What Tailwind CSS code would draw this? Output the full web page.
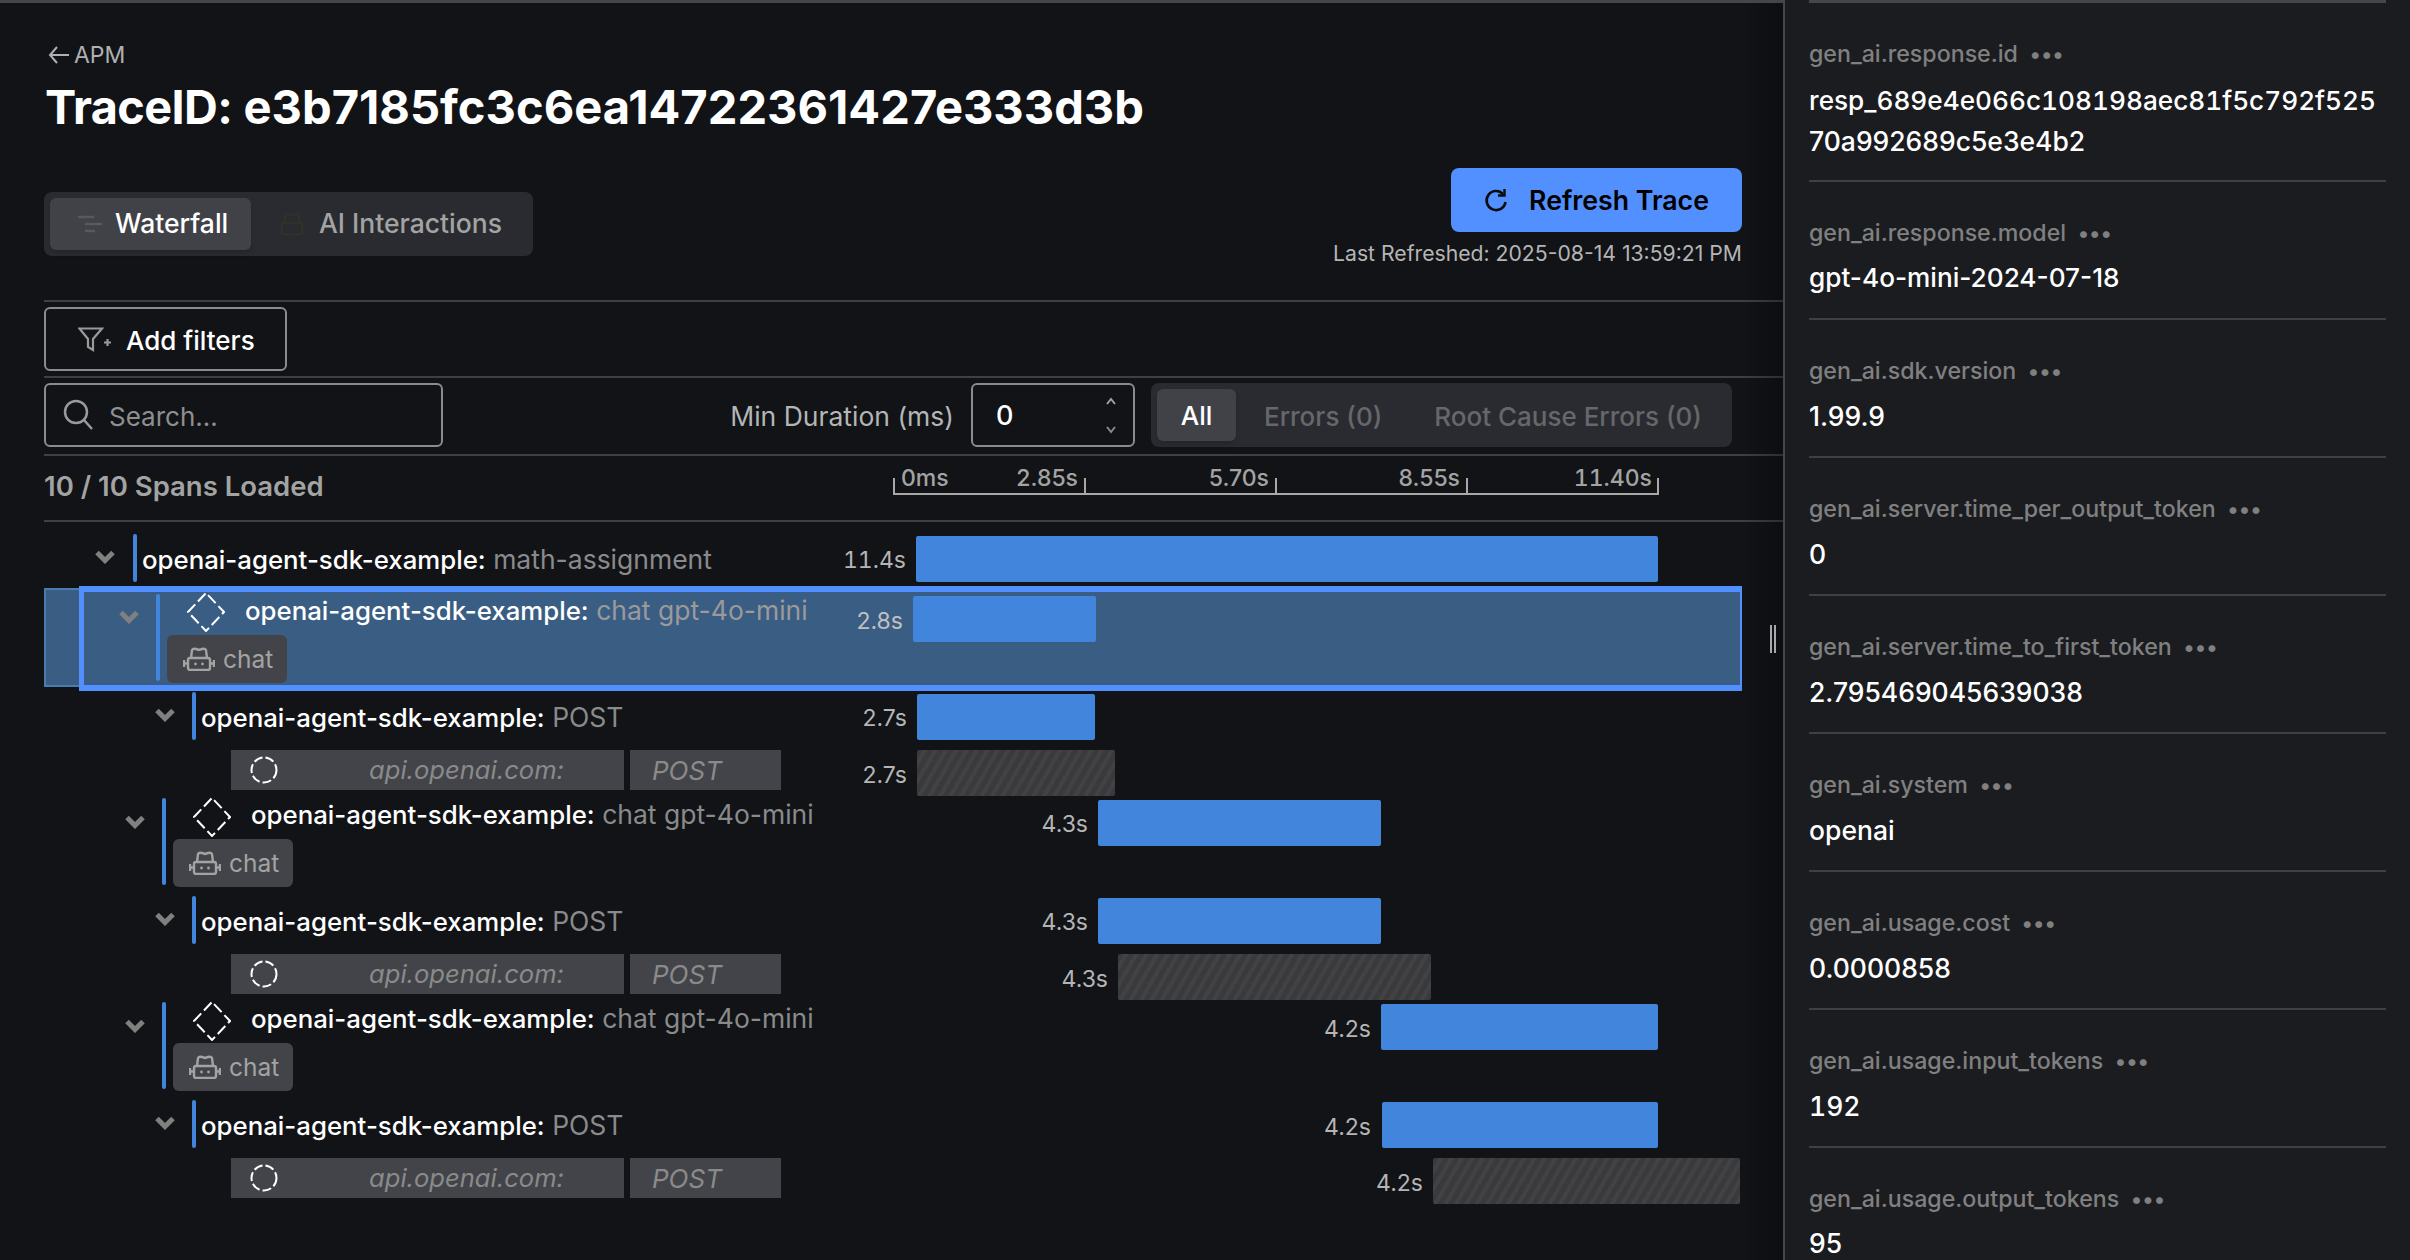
<!DOCTYPE html>
<html>
<head>
<meta charset="utf-8">
<script src="https://cdn.jsdelivr.net/npm/@tailwindcss/browser@4"></script>
<title>Trace</title>
</head>
<body class="bg-[#111317]">
<svg class="hidden">
  <defs>
    <symbol id="chev" viewBox="0 0 20 14"><path d="M2 2.500 L10 10.500 L18 2.500" fill="none" stroke="#808080" stroke-width="5"/></symbol>
    <symbol id="diamond" viewBox="0 0 38 40"><path d="M19 1 L37 20 L19 39 L1 20 Z" fill="none" stroke="#fff" stroke-width="2" stroke-dasharray="11 4" stroke-dashoffset="-3"/></symbol>
    <symbol id="circle" viewBox="0 0 28 28"><circle cx="14" cy="14" r="12.500" fill="none" stroke="#fff" stroke-width="2" stroke-dasharray="9 3"/></symbol>
    <symbol id="robot" viewBox="0 0 32 24"><g fill="none" stroke="#a3a3a3" stroke-width="2.400"><path d="M8 11 L9 3 Q10 1 13 2 L16 3 L19 2 Q22 1 23 3 L24 11"/><rect x="5" y="11" width="22" height="12" rx="2"/><path d="M1 13 V20 M31 13 V20 M0 16.500 H5 M27 16.500 H32"/></g><circle cx="12.500" cy="17" r="1.400" fill="#a3a3a3"/><circle cx="19.500" cy="17" r="1.400" fill="#a3a3a3"/></symbol>
  </defs>
</svg>
<div class="w-[2410px] h-[1260px] overflow-hidden flex font-['Inter',sans-serif]">
  <main class="relative w-[1783px] shrink-0 pl-[44px] border-t-[3px] border-[#45464b]">
    <div class="absolute right-0 top-0 bottom-0 w-[40px] bg-linear-to-r from-transparent to-black/30"></div>
    <div class="absolute left-[1770px] top-[622px] w-[6px] h-[28px] border-x-2 border-[#a8a8a8]"></div>
    <div class="h-[297px] flex justify-between">
      <div>
        <div class="flex items-center gap-[3px] mt-[40px] h-[24px] text-[23px] text-[#b0b0b0]">
          <svg class="ml-[3px] shrink-0" width="24" height="20" viewBox="0 0 24 20" fill="none" stroke="#b0b0b0" stroke-width="2"><path d="M22 10 H3 M10 2 L3 10 L10 18"/></svg><span>APM</span>
        </div>
        <h1 class="mt-[11px] ml-[1px] h-[58px] leading-[58px] text-[47.100px] font-bold text-white whitespace-nowrap"><span class="text-[46.800px] tracking-[-0.6px]">TraceID:</span> e3b7185fc3c6ea14722361427e333d3b</h1>
        <div class="mt-[56px] w-[489px] h-[64px] bg-[#2a2b30] rounded-[8px] p-[6px] flex items-center text-[26.500px] font-medium">
          <div class="w-[201px] h-[52px] bg-[#414247] rounded-[6px] flex items-center text-white pl-[27px] shadow-md">
            <svg class="shrink-0" width="26" height="20" viewBox="0 0 26 20" fill="none" stroke="#58595d" stroke-width="2.500"><path d="M1 3 H17 M8 10 H25 M8 17 H18"/></svg>
            <span class="ml-[12px]">Waterfall</span>
          </div>
          <div class="flex items-center text-[#a3a3a3] pl-[26px]">
            <svg class="shrink-0" width="30" height="24" viewBox="0 0 32 24" fill="none" stroke="#303129" stroke-width="2.400"><path d="M8 11 L9 3 Q10 1 13 2 L16 3 L19 2 Q22 1 23 3 L24 11"/><rect x="5" y="11" width="22" height="12" rx="2"/></svg>
            <span class="ml-[12px]">AI Interactions</span>
          </div>
        </div>
      </div>
      <div class="flex flex-col items-end mr-[41px]">
        <button class="mt-[165px] w-[291px] h-[64px] rounded-[8px] bg-[#528fff] flex items-center justify-center gap-[21px] text-black text-[26.700px] font-semibold">
          <svg class="shrink-0" width="24" height="26" viewBox="0 0 24 26" fill="none" stroke="#0b0b0b" stroke-width="2.600"><path d="M19 7 A9.500 9.500 0 1 0 21.500 15"/><path d="M20.500 2 V8.500 H14" stroke-width="2.400"/></svg>
          <span>Refresh Trace</span>
        </button>
        <div class="mt-[10px] text-[21.200px] leading-[22px] text-[#b5b5b5] whitespace-nowrap">Last Refreshed: 2025-08-14 13:59:21 PM</div>
      </div>
    </div>
    <div class="h-[76px] border-t-2 border-[#3f4044] pt-[5px]">
      <button class="w-[243px] h-[64px] border-2 border-[#8b8b8b] rounded-[6px] flex items-center pl-[32px] pt-[2px] text-[26px] font-medium text-white">
        <svg class="shrink-0" width="34" height="26" viewBox="0 0 34 26" fill="none" stroke="#9a9a9a" stroke-width="2.200"><path d="M1.500 1.500 H24 L15 12 V23 L10 20 V12 Z"/><path d="M26 15.500 H33 M29.500 12 V19"/></svg>
        <span class="ml-[14px]">Add filters</span>
      </button>
    </div>
    <div class="h-[78px] border-t-2 border-[#3f4044] pt-[5px] flex items-start">
      <div class="w-[399px] h-[64px] border-2 border-[#8b8b8b] rounded-[6px] flex items-center pl-[16px] text-[26px] text-[#8f8f8f]">
        <svg class="shrink-0" width="32" height="32" viewBox="0 0 32 32" fill="none" stroke="#9a9a9a" stroke-width="2.500"><circle cx="14" cy="13" r="11"/><path d="M22 21 L30 30"/></svg>
        <span class="ml-[15px] pt-[3px]">Search…</span>
      </div>
      <div class="w-[528px] h-[64px] flex items-center justify-end pr-[17px] pt-[3px] text-[26.500px] text-[#b5b5b5] whitespace-nowrap">Min Duration (ms)</div>
      <div class="w-[164px] h-[64px] border-2 border-[#8b8b8b] rounded-[6px] flex items-center justify-between pl-[23px] pr-[17px] text-[27px] text-white font-medium">
        <span class="pt-[2px]">0</span>
        <div class="flex flex-col gap-[19px]">
          <svg class="shrink-0" width="10" height="9" viewBox="0 0 10 9" fill="none" stroke="#a3a3a3" stroke-width="2"><path d="M1 7 L5 2 L9 7"/></svg>
          <svg class="shrink-0" width="10" height="9" viewBox="0 0 10 9" fill="none" stroke="#8a8a8a" stroke-width="2"><path d="M1 2 L5 7 L9 2"/></svg>
        </div>
      </div>
      <div class="ml-[16px] w-[581px] h-[64px] bg-[#2a2b30] rounded-[8px] p-[6px] flex items-center text-[26px] font-medium text-[#66676a]">
        <div class="w-[79px] h-[52px] bg-[#414247] rounded-[6px] flex items-center justify-center text-white shadow-md">All</div>
        <span class="ml-[28px] pt-[2px]">Errors (0)</span>
        <span class="ml-[52px] pt-[2px]">Root Cause Errors (0)</span>
      </div>
    </div>
    <div class="h-[66px] border-t-2 border-[#3f4044] flex">
      <div class="w-[849px] pt-[14px] text-[27.500px] leading-[33px] font-semibold text-[#a3a3a3]">10 / 10 Spans Loaded</div>
      <div class="mt-[22px] w-[766px] h-[17px] flex border-l-2 border-b-2 border-[#a8a8a8] text-[23px] leading-[18px] font-medium text-[#a3a3a3]">
        <div class="w-[191px] border-r-2 border-[#a8a8a8] flex justify-between pl-[6px] pr-[6px]"><span class="-mt-[9px]">0ms</span><span class="-mt-[9px]">2.85s</span></div>
        <div class="w-[191px] border-r-2 border-[#a8a8a8] flex justify-end pr-[6px]"><span class="-mt-[9px]">5.70s</span></div>
        <div class="w-[191px] border-r-2 border-[#a8a8a8] flex justify-end pr-[6px]"><span class="-mt-[9px]">8.55s</span></div>
        <div class="w-[191px] border-r-2 border-[#a8a8a8] flex justify-end pr-[5px]"><span class="-mt-[9px] tabular-nums">11.40s</span></div>
      </div>
    </div>
    <div class="border-t-2 border-[#3f4044] pt-[12px] text-[26.500px] text-white">
      <!-- row 1 -->
      <div class="h-[52px] flex items-start">
        <div class="w-[786px] shrink-0 h-[48px] flex">
          <svg class="ml-[51px] mt-[16px] shrink-0" width="20" height="14"><use href="#chev"/></svg>
          <div class="ml-[18px] w-[4px] h-[48px] shrink-0 rounded-full bg-[#4285dc]"></div>
          <div class="ml-[5px] pt-[9px] leading-[33px] whitespace-nowrap"><span class="font-medium text-[25.800px]">openai-agent-sdk-example:</span> <span class="text-[#8a8a8a]">math-assignment</span></div>
        </div>
        <div class="flex">
          <div class="w-[76px] pt-[11px] text-right text-[23px] leading-[30px] text-[#b5b5b5] tabular-nums">11.4s</div>
          <div class="ml-[10px] w-[742px] h-[46px] mt-[2px] rounded-[2px] bg-[#4285dc]"></div>
        </div>
      </div>
      <!-- selected row -->
      <div class="h-[106px] flex items-start">
        <div class="w-[35px] h-[99px] mt-[2px] shrink-0 bg-[#3a5d84] border-2 border-r-0 border-[#4a7cb0]"></div>
        <div class="w-[1663px] h-[105px] shrink-0 border-y-[6px] border-l-[5px] border-r-2 border-[#528fff] bg-[#3a5d84] flex">
          <div class="w-[741px] shrink-0 flex">
            <svg class="ml-[35px] mt-[18px] shrink-0" width="20" height="14"><use href="#chev"/></svg>
            <div class="ml-[17px] mt-[2px] w-[4px] h-[87px] shrink-0 rounded-full bg-[#4285dc]"></div>
            <div class="ml-[7px]">
              <div class="flex h-[43px]">
                <svg class="ml-[20px] shrink-0" width="38" height="40"><use href="#diamond"/></svg>
                <div class="ml-[20px] pt-[2px] leading-[33px] whitespace-nowrap"><span class="font-medium text-[25.800px]">openai-agent-sdk-example:</span> <span class="text-[#9a9a9a]">chat gpt-4o-mini</span></div>
              </div>
              <div class="w-[120px] h-[48px] rounded-[6px] bg-[#434449] flex items-center pl-[16px] text-[24.500px] text-[#a3a3a3]">
                <svg class="shrink-0" width="32" height="24"><use href="#robot"/></svg><span class="ml-[8px]">chat</span>
              </div>
            </div>
          </div>
          <div class="flex">
            <div class="w-[78px] pt-[14px] text-right text-[23px] leading-[30px] text-[#c0c0c0]">2.8s</div>
            <div class="ml-[10px] w-[183px] h-[46px] mt-[4px] rounded-[2px] bg-[#4285dc]"></div>
          </div>
        </div>
      </div>
      <!-- group 1 -->
      <div class="h-[58px] flex items-start">
        <div class="w-[786px] shrink-0 flex">
          <svg class="ml-[111px] mt-[16px] shrink-0" width="20" height="14"><use href="#chev"/></svg>
          <div class="ml-[17px] w-[4px] h-[48px] shrink-0 rounded-full bg-[#4285dc]"></div>
          <div class="ml-[5px] pt-[9px] leading-[33px] whitespace-nowrap"><span class="font-medium text-[25.800px]">openai-agent-sdk-example:</span> <span class="text-[#8a8a8a]">POST</span></div>
        </div>
        <div class="flex">
          <div class="w-[77px] pt-[11px] text-right text-[23px] leading-[30px] text-[#b5b5b5]">2.7s</div>
          <div class="ml-[10px] w-[178px] h-[46px] mt-[2px] rounded-[2px] bg-[#4285dc]"></div>
        </div>
      </div>
      <div class="h-[48px] flex items-start">
        <div class="w-[786px] shrink-0 flex pl-[187px] gap-[6px]">
          <div class="w-[393px] h-[40px] bg-[#434449] flex items-center pl-[19px]">
            <svg class="shrink-0" width="28" height="28"><use href="#circle"/></svg>
            <span class="ml-[91px] italic text-[#8a8a8a] text-[25.600px]">api.openai.com:</span>
          </div>
          <div class="w-[151px] h-[40px] bg-[#434449] flex items-center pl-[22px] italic text-[#8a8a8a] text-[26px]">POST</div>
        </div>
        <div class="flex">
          <div class="w-[77px] pt-[10px] text-right text-[23px] leading-[30px] text-[#b5b5b5]">2.7s</div>
          <div class="ml-[10px] w-[198px] h-[46px] rounded-[2px] bg-[repeating-linear-gradient(120deg,#3a3a3c_0,#3a3a3c_5px,#424244_5px,#424244_9px)]"></div>
        </div>
      </div>
      <div class="h-[98px] flex items-start">
        <div class="w-[786px] shrink-0 flex">
          <svg class="ml-[81px] mt-[17px] shrink-0" width="20" height="14"><use href="#chev"/></svg>
          <div class="ml-[17px] w-[4px] h-[87px] shrink-0 rounded-full bg-[#4285dc]"></div>
          <div class="ml-[7px]">
            <div class="flex h-[41px]">
              <svg class="ml-[20px] -mt-[1px] shrink-0" width="38" height="40"><use href="#diamond"/></svg>
              <div class="ml-[20px] leading-[33px] whitespace-nowrap"><span class="font-medium text-[25.800px]">openai-agent-sdk-example:</span> <span class="text-[#8a8a8a]">chat gpt-4o-mini</span></div>
            </div>
            <div class="w-[120px] h-[48px] rounded-[6px] bg-[#434449] flex items-center pl-[16px] text-[24.500px] text-[#a3a3a3]">
              <svg class="shrink-0" width="32" height="24"><use href="#robot"/></svg><span class="ml-[8px]">chat</span>
            </div>
          </div>
        </div>
        <div class="flex">
          <div class="w-[258px] pt-[11px] text-right text-[23px] leading-[30px] text-[#b5b5b5]">4.3s</div>
          <div class="ml-[10px] w-[283px] h-[46px] mt-[2px] rounded-[2px] bg-[#4285dc]"></div>
        </div>
      </div>
      <!-- group 2 -->
      <div class="h-[58px] flex items-start">
        <div class="w-[786px] shrink-0 flex">
          <svg class="ml-[111px] mt-[16px] shrink-0" width="20" height="14"><use href="#chev"/></svg>
          <div class="ml-[17px] w-[4px] h-[48px] shrink-0 rounded-full bg-[#4285dc]"></div>
          <div class="ml-[5px] pt-[9px] leading-[33px] whitespace-nowrap"><span class="font-medium text-[25.800px]">openai-agent-sdk-example:</span> <span class="text-[#8a8a8a]">POST</span></div>
        </div>
        <div class="flex">
          <div class="w-[258px] pt-[11px] text-right text-[23px] leading-[30px] text-[#b5b5b5]">4.3s</div>
          <div class="ml-[10px] w-[283px] h-[46px] mt-[2px] rounded-[2px] bg-[#4285dc]"></div>
        </div>
      </div>
      <div class="h-[48px] flex items-start">
        <div class="w-[786px] shrink-0 flex pl-[187px] gap-[6px]">
          <div class="w-[393px] h-[40px] bg-[#434449] flex items-center pl-[19px]">
            <svg class="shrink-0" width="28" height="28"><use href="#circle"/></svg>
            <span class="ml-[91px] italic text-[#8a8a8a] text-[25.600px]">api.openai.com:</span>
          </div>
          <div class="w-[151px] h-[40px] bg-[#434449] flex items-center pl-[22px] italic text-[#8a8a8a] text-[26px]">POST</div>
        </div>
        <div class="flex">
          <div class="w-[278px] pt-[10px] text-right text-[23px] leading-[30px] text-[#b5b5b5]">4.3s</div>
          <div class="ml-[10px] w-[313px] h-[46px] rounded-[2px] bg-[repeating-linear-gradient(120deg,#3a3a3c_0,#3a3a3c_5px,#424244_5px,#424244_9px)]"></div>
        </div>
      </div>
      <div class="h-[98px] flex items-start">
        <div class="w-[786px] shrink-0 flex">
          <svg class="ml-[81px] mt-[17px] shrink-0" width="20" height="14"><use href="#chev"/></svg>
          <div class="ml-[17px] w-[4px] h-[87px] shrink-0 rounded-full bg-[#4285dc]"></div>
          <div class="ml-[7px]">
            <div class="flex h-[41px]">
              <svg class="ml-[20px] -mt-[1px] shrink-0" width="38" height="40"><use href="#diamond"/></svg>
              <div class="ml-[20px] leading-[33px] whitespace-nowrap"><span class="font-medium text-[25.800px]">openai-agent-sdk-example:</span> <span class="text-[#8a8a8a]">chat gpt-4o-mini</span></div>
            </div>
            <div class="w-[120px] h-[48px] rounded-[6px] bg-[#434449] flex items-center pl-[16px] text-[24.500px] text-[#a3a3a3]">
              <svg class="shrink-0" width="32" height="24"><use href="#robot"/></svg><span class="ml-[8px]">chat</span>
            </div>
          </div>
        </div>
        <div class="flex">
          <div class="w-[541px] pt-[12px] text-right text-[23px] leading-[30px] text-[#b5b5b5]">4.2s</div>
          <div class="ml-[10px] w-[277px] h-[46px] mt-[2px] rounded-[2px] bg-[#4285dc]"></div>
        </div>
      </div>
      <!-- group 3 -->
      <div class="h-[58px] flex items-start">
        <div class="w-[786px] shrink-0 flex">
          <svg class="ml-[111px] mt-[16px] shrink-0" width="20" height="14"><use href="#chev"/></svg>
          <div class="ml-[17px] w-[4px] h-[48px] shrink-0 rounded-full bg-[#4285dc]"></div>
          <div class="ml-[5px] pt-[9px] leading-[33px] whitespace-nowrap"><span class="font-medium text-[25.800px]">openai-agent-sdk-example:</span> <span class="text-[#8a8a8a]">POST</span></div>
        </div>
        <div class="flex">
          <div class="w-[541px] pt-[12px] text-right text-[23px] leading-[30px] text-[#b5b5b5]">4.2s</div>
          <div class="ml-[11px] w-[276px] h-[46px] mt-[2px] rounded-[2px] bg-[#4285dc]"></div>
        </div>
      </div>
      <div class="h-[48px] flex items-start">
        <div class="w-[786px] shrink-0 flex pl-[187px] gap-[6px]">
          <div class="w-[393px] h-[40px] bg-[#434449] flex items-center pl-[19px]">
            <svg class="shrink-0" width="28" height="28"><use href="#circle"/></svg>
            <span class="ml-[91px] italic text-[#8a8a8a] text-[25.600px]">api.openai.com:</span>
          </div>
          <div class="w-[151px] h-[40px] bg-[#434449] flex items-center pl-[22px] italic text-[#8a8a8a] text-[26px]">POST</div>
        </div>
        <div class="flex">
          <div class="w-[593px] pt-[10px] text-right text-[23px] leading-[30px] text-[#b5b5b5]">4.2s</div>
          <div class="ml-[10px] w-[307px] h-[46px] rounded-[2px] bg-[repeating-linear-gradient(120deg,#3a3a3c_0,#3a3a3c_5px,#424244_5px,#424244_9px)]"></div>
        </div>
      </div>
    </div>
  </main>
  <aside class="flex-1 border-l-2 border-[#45464b] bg-[#1b1c20] pl-[24px] pr-[24px]">
    <div class="h-[3px] bg-[#45464b]"></div>
    <div class="border-b-2 border-[#3f4044] h-[179px] pt-[35px]">
      <div class="flex items-center h-[32px] text-[23.200px] font-medium text-[#808080]"><span>gen_ai.response.id</span><span class="ml-[12px] text-[22px] tracking-[1px] font-bold">•••</span></div>
      <div class="mt-[10px] text-[26.500px] leading-[40px] text-white font-medium"><span class="tabular-nums text-[26.200px]">resp_689e4e066c108198aec81f5c792f525</span><br>70a992689c5e3e4b2</div>
    </div>
    <div class="border-b-2 border-[#3f4044] h-[138px] pt-[35px]">
      <div class="flex items-center h-[32px] text-[23.200px] font-medium text-[#808080]"><span>gen_ai.response.model</span><span class="ml-[12px] text-[22px] tracking-[1px] font-bold">•••</span></div>
      <div class="mt-[9px] text-[26.200px] leading-[40px] text-white font-medium">gpt-4o-mini-2024-07-18</div>
    </div>
    <div class="border-b-2 border-[#3f4044] h-[138px] pt-[35px]">
      <div class="flex items-center h-[32px] text-[23.200px] font-medium text-[#808080]"><span>gen_ai.sdk.version</span><span class="ml-[12px] text-[22px] tracking-[1px] font-bold">•••</span></div>
      <div class="mt-[9px] text-[26.500px] leading-[40px] text-white font-medium">1.99.9</div>
    </div>
    <div class="border-b-2 border-[#3f4044] h-[138px] pt-[35px]">
      <div class="flex items-center h-[32px] text-[23.200px] font-medium text-[#808080]"><span>gen_ai.server.time_per_output_token</span><span class="ml-[12px] text-[22px] tracking-[1px] font-bold">•••</span></div>
      <div class="mt-[9px] text-[26.500px] leading-[40px] text-white font-medium">0</div>
    </div>
    <div class="border-b-2 border-[#3f4044] h-[138px] pt-[35px]">
      <div class="flex items-center h-[32px] text-[23.200px] font-medium text-[#808080]"><span>gen_ai.server.time_to_first_token</span><span class="ml-[12px] text-[22px] tracking-[1px] font-bold">•••</span></div>
      <div class="mt-[9px] text-[26.500px] leading-[40px] text-white font-medium">2.795469045639038</div>
    </div>
    <div class="border-b-2 border-[#3f4044] h-[138px] pt-[35px]">
      <div class="flex items-center h-[32px] text-[23.200px] font-medium text-[#808080]"><span>gen_ai.system</span><span class="ml-[12px] text-[22px] tracking-[1px] font-bold">•••</span></div>
      <div class="mt-[9px] text-[26.500px] leading-[40px] text-white font-medium">openai</div>
    </div>
    <div class="border-b-2 border-[#3f4044] h-[138px] pt-[35px]">
      <div class="flex items-center h-[32px] text-[23.200px] font-medium text-[#808080]"><span>gen_ai.usage.cost</span><span class="ml-[12px] text-[22px] tracking-[1px] font-bold">•••</span></div>
      <div class="mt-[9px] text-[26.500px] leading-[40px] text-white font-medium">0.0000858</div>
    </div>
    <div class="border-b-2 border-[#3f4044] h-[138px] pt-[35px]">
      <div class="flex items-center h-[32px] text-[23.200px] font-medium text-[#808080]"><span>gen_ai.usage.input_tokens</span><span class="ml-[12px] text-[22px] tracking-[1px] font-bold">•••</span></div>
      <div class="mt-[9px] text-[26.500px] leading-[40px] text-white font-medium tabular-nums">192</div>
    </div>
    <div class="pt-[35px]">
      <div class="flex items-center h-[32px] text-[23.200px] font-medium text-[#808080]"><span>gen_ai.usage.output_tokens</span><span class="ml-[12px] text-[22px] tracking-[1px] font-bold">•••</span></div>
      <div class="mt-[13px] text-[26.500px] leading-[30px] text-white font-medium">95</div>
    </div>
  </aside>
</div>
</body>
</html>
